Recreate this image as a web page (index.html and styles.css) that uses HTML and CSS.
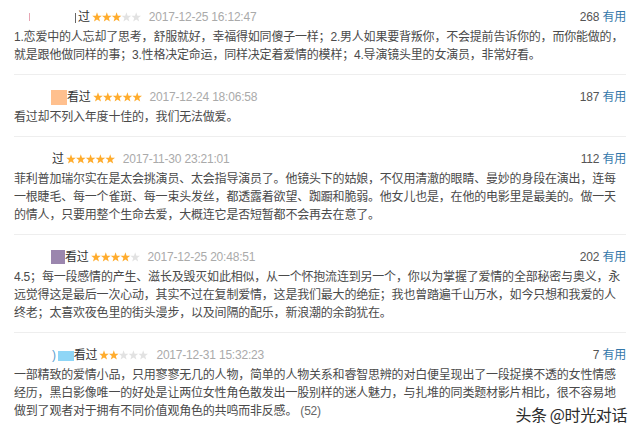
FILE: index.html
```html
<!DOCTYPE html>
<html lang="zh">
<head>
    <meta charset="UTF-8">
    <title>短评</title>
    <link rel="stylesheet" href="styles.css">
</head>
<body>
    <div class="comments">
        <div class="comment">
            <div class="meta">
                <span class="tick tick-1"></span>
                <span class="cut"></span>
                <span class="who">过</span>
                <svg class="stars" width="49" height="10" viewBox="0 0 49 10">
                    <polygon class="on" points="5,0.3 6.2,3.7 9.8,3.8 7,6 8,9.6 5,7.5 2,9.6 3,6 0.2,3.8 3.8,3.7"/>
                    <polygon class="on" transform="translate(9.8 0)" points="5,0.3 6.2,3.7 9.8,3.8 7,6 8,9.6 5,7.5 2,9.6 3,6 0.2,3.8 3.8,3.7"/>
                    <polygon class="on" transform="translate(19.6 0)" points="5,0.3 6.2,3.7 9.8,3.8 7,6 8,9.6 5,7.5 2,9.6 3,6 0.2,3.8 3.8,3.7"/>
                    <polygon class="off" transform="translate(29.4 0)" points="5,0.3 6.2,3.7 9.8,3.8 7,6 8,9.6 5,7.5 2,9.6 3,6 0.2,3.8 3.8,3.7"/>
                    <polygon class="off" transform="translate(39.2 0)" points="5,0.3 6.2,3.7 9.8,3.8 7,6 8,9.6 5,7.5 2,9.6 3,6 0.2,3.8 3.8,3.7"/>
                </svg>
                <span class="time">2017-12-25 16:12:47</span>
                <span class="votes">268 <a href="#">有用</a></span>
            </div>
            <p class="text">1.恋爱中的人忘却了思考，舒服就好，幸福得如同傻子一样；2.男人如果要背叛你，不会提前告诉你的，而你能做的，就是跟他做同样的事；3.性格决定命运，同样决定着爱情的模样；4.导演镜头里的女演员，非常好看。</p>
        </div>

        <div class="comment">
            <div class="meta">
                <span class="avatar avatar-orange"></span>
                <span class="who">看过</span>
                <svg class="stars" width="49" height="10" viewBox="0 0 49 10">
                    <polygon class="on" points="5,0.3 6.2,3.7 9.8,3.8 7,6 8,9.6 5,7.5 2,9.6 3,6 0.2,3.8 3.8,3.7"/>
                    <polygon class="on" transform="translate(9.8 0)" points="5,0.3 6.2,3.7 9.8,3.8 7,6 8,9.6 5,7.5 2,9.6 3,6 0.2,3.8 3.8,3.7"/>
                    <polygon class="on" transform="translate(19.6 0)" points="5,0.3 6.2,3.7 9.8,3.8 7,6 8,9.6 5,7.5 2,9.6 3,6 0.2,3.8 3.8,3.7"/>
                    <polygon class="on" transform="translate(29.4 0)" points="5,0.3 6.2,3.7 9.8,3.8 7,6 8,9.6 5,7.5 2,9.6 3,6 0.2,3.8 3.8,3.7"/>
                    <polygon class="on" transform="translate(39.2 0)" points="5,0.3 6.2,3.7 9.8,3.8 7,6 8,9.6 5,7.5 2,9.6 3,6 0.2,3.8 3.8,3.7"/>
                </svg>
                <span class="time">2017-12-24 18:06:58</span>
                <span class="votes">187 <a href="#">有用</a></span>
            </div>
            <p class="text">看过却不列入年度十佳的，我们无法做爱。</p>
        </div>

        <div class="comment">
            <div class="meta">
                <span class="who who-3">过</span>
                <svg class="stars" width="49" height="10" viewBox="0 0 49 10">
                    <polygon class="on" points="5,0.3 6.2,3.7 9.8,3.8 7,6 8,9.6 5,7.5 2,9.6 3,6 0.2,3.8 3.8,3.7"/>
                    <polygon class="on" transform="translate(9.8 0)" points="5,0.3 6.2,3.7 9.8,3.8 7,6 8,9.6 5,7.5 2,9.6 3,6 0.2,3.8 3.8,3.7"/>
                    <polygon class="on" transform="translate(19.6 0)" points="5,0.3 6.2,3.7 9.8,3.8 7,6 8,9.6 5,7.5 2,9.6 3,6 0.2,3.8 3.8,3.7"/>
                    <polygon class="on" transform="translate(29.4 0)" points="5,0.3 6.2,3.7 9.8,3.8 7,6 8,9.6 5,7.5 2,9.6 3,6 0.2,3.8 3.8,3.7"/>
                    <polygon class="on" transform="translate(39.2 0)" points="5,0.3 6.2,3.7 9.8,3.8 7,6 8,9.6 5,7.5 2,9.6 3,6 0.2,3.8 3.8,3.7"/>
                </svg>
                <span class="time">2017-11-30 23:21:01</span>
                <span class="votes">112 <a href="#">有用</a></span>
            </div>
            <p class="text">菲利普加瑞尔实在是太会挑演员、太会指导演员了。他镜头下的姑娘，不仅用清澈的眼睛、曼妙的身段在演出，连每一根睫毛、每一个雀斑、每一束头发丝，都透露着欲望、踟蹰和脆弱。他女儿也是，在他的电影里是最美的。做一天的情人，只要用整个生命去爱，大概连它是否短暂都不会再去在意了。</p>
        </div>

        <div class="comment">
            <div class="meta">
                <span class="avatar avatar-purple"></span>
                <span class="who">看过</span>
                <svg class="stars" width="49" height="10" viewBox="0 0 49 10">
                    <polygon class="on" points="5,0.3 6.2,3.7 9.8,3.8 7,6 8,9.6 5,7.5 2,9.6 3,6 0.2,3.8 3.8,3.7"/>
                    <polygon class="on" transform="translate(9.8 0)" points="5,0.3 6.2,3.7 9.8,3.8 7,6 8,9.6 5,7.5 2,9.6 3,6 0.2,3.8 3.8,3.7"/>
                    <polygon class="on" transform="translate(19.6 0)" points="5,0.3 6.2,3.7 9.8,3.8 7,6 8,9.6 5,7.5 2,9.6 3,6 0.2,3.8 3.8,3.7"/>
                    <polygon class="on" transform="translate(29.4 0)" points="5,0.3 6.2,3.7 9.8,3.8 7,6 8,9.6 5,7.5 2,9.6 3,6 0.2,3.8 3.8,3.7"/>
                    <polygon class="off" transform="translate(39.2 0)" points="5,0.3 6.2,3.7 9.8,3.8 7,6 8,9.6 5,7.5 2,9.6 3,6 0.2,3.8 3.8,3.7"/>
                </svg>
                <span class="time">2017-12-25 20:48:51</span>
                <span class="votes">202 <a href="#">有用</a></span>
            </div>
            <p class="text">4.5；每一段感情的产生、滋长及毁灭如此相似，从一个怀抱流连到另一个，你以为掌握了爱情的全部秘密与奥义，永远觉得这是最后一次心动，其实不过在复制爱情，这是我们最大的绝症；我也曾踏遍千山万水，如今只想和我爱的人终老；太喜欢夜色里的街头漫步，以及间隔的配乐，新浪潮的余韵犹在。</p>
        </div>

        <div class="comment">
            <div class="meta">
                <span class="paren">)</span>
                <span class="avatar avatar-blue"></span>
                <span class="who">看过</span>
                <svg class="stars" width="49" height="10" viewBox="0 0 49 10">
                    <polygon class="on" points="5,0.3 6.2,3.7 9.8,3.8 7,6 8,9.6 5,7.5 2,9.6 3,6 0.2,3.8 3.8,3.7"/>
                    <polygon class="on" transform="translate(9.8 0)" points="5,0.3 6.2,3.7 9.8,3.8 7,6 8,9.6 5,7.5 2,9.6 3,6 0.2,3.8 3.8,3.7"/>
                    <polygon class="off" transform="translate(19.6 0)" points="5,0.3 6.2,3.7 9.8,3.8 7,6 8,9.6 5,7.5 2,9.6 3,6 0.2,3.8 3.8,3.7"/>
                    <polygon class="off" transform="translate(29.4 0)" points="5,0.3 6.2,3.7 9.8,3.8 7,6 8,9.6 5,7.5 2,9.6 3,6 0.2,3.8 3.8,3.7"/>
                    <polygon class="off" transform="translate(39.2 0)" points="5,0.3 6.2,3.7 9.8,3.8 7,6 8,9.6 5,7.5 2,9.6 3,6 0.2,3.8 3.8,3.7"/>
                </svg>
                <span class="time">2017-12-31 15:32:23</span>
                <span class="votes">7 <a href="#">有用</a></span>
            </div>
            <p class="text">一部精致的爱情小品，只用寥寥无几的人物，简单的人物关系和睿智思辨的对白便呈现出了一段捉摸不透的女性情感经历，黑白影像唯一的好处是让两位女性角色散发出一股别样的迷人魅力，与扎堆的同类题材影片相比，很不容易地做到了观者对于拥有不同价值观角色的共鸣而非反感。 <span class="more">(52)</span></p>
        </div>
    </div>

    <div class="watermark">头条 @时光对话</div>
</body>
</html>
```

FILE: styles.css
```css
body {
    margin: 0 14px;
    background: #fff;
    font-family: "Liberation Sans", "Noto Sans CJK SC", sans-serif;
    font-size: 12px;
    letter-spacing: -0.2px;
    color: #4a4a4a;
}
.comments {
    display: flex;
    flex-direction: column;
}
.comment {
    padding: 12px 0 10px;
    border-bottom: 1px solid #eee;
}
.comment:first-child {
    padding-top: 7px;
}
.comment:last-child {
    border-bottom: none;
}
.meta {
    display: flex;
    align-items: center;
    height: 20px;
    line-height: 20px;
}
.who {
    color: #333;
}
.who-3 {
    margin-left: 38px;
}
.tick {
    display: inline-block;
    width: 1px;
    height: 8px;
    background: #e7a6b4;
}
.tick-1 {
    margin-left: 15px;
}
.cut {
    display: inline-block;
    width: 1px;
    height: 10px;
    margin: 1px 2px 0 45px;
    background: #666;
}
.avatar {
    display: inline-block;
    margin-left: 37px;
}
.avatar-orange {
    width: 16px;
    height: 15px;
    background: #ffc08e;
}
.avatar-purple {
    width: 14px;
    height: 14px;
    background: #9b86ae;
}
.avatar-blue {
    width: 16px;
    height: 10px;
    margin-left: 2px;
    margin-top: 2px;
    background: #8fd6f6;
}
.paren {
    margin-left: 38px;
    color: #5a9fd0;
}
.stars {
    margin-left: 2px;
    display: block;
}
.stars .on {
    fill: #ffac2d;
}
.stars .off {
    fill: #e2e2e2;
}
.time {
    margin-left: 8px;
    color: #aaa;
}
.votes {
    margin-left: auto;
    color: #555;
}
.votes a {
    color: #37a;
    text-decoration: none;
}
.text {
    margin: 1px 0 0;
    line-height: 18px;
}
.more {
    color: #666;
}
.watermark {
    position: absolute;
    right: 13px;
    top: 403px;
    font-family: "Noto Sans CJK SC", sans-serif;
    font-size: 16px;
    line-height: 22px;
    letter-spacing: -0.4px;
    color: #2b2b2b;
    text-shadow: 0 0 2px #fff, 0 0 1px #fff;
}
```
